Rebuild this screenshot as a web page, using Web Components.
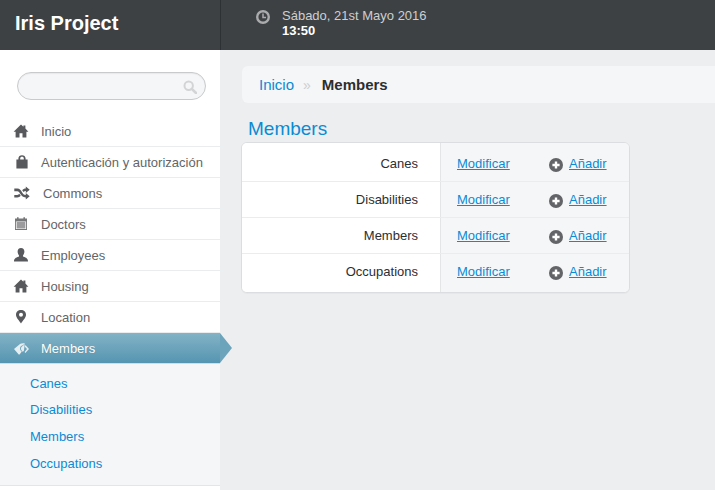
<!DOCTYPE html>
<html><head><meta charset="utf-8"><style>
html,body{margin:0;padding:0;height:490px;overflow:hidden;background:#edeef0;font-family:"Liberation Sans",Arial,sans-serif}
</style></head><body>
<iris-app></iris-app>
<script>
const ICONS={
home:'<path d="M7 .6 L9.4 2.8 V1.4 H11.4 V4.6 L14.4 7.8 H12.4 V13.4 H8.5 V9.2 H5.5 V13.4 H1.6 V7.8 H-.4 Z"/>',
lock:'<path fill-rule="evenodd" d="M2.4 4.4 V3.6 C2.4 1.4 4 .2 6 .2 S9.6 1.4 9.6 3.6 V4.4 H11.6 V13.5 H.4 V4.4 Z M4.2 4.4 H7.8 V3.6 C7.8 2.4 7.1 1.8 6 1.8 S4.2 2.4 4.2 3.6 Z"/>',
shuffle:'<path d="M0 2.6 H3 C5.6 2.6 6.6 4.5 7.7 6.2 C8.6 7.6 9.5 9 11.5 9 V7 L15.4 10.2 L11.5 13.4 V11.4 C8.4 11.4 7 9.4 5.9 7.7 C5 6.3 4.4 5.2 3 5.2 H0 Z M0 8.9 H3 C3.9 8.9 4.5 8.4 5 7.8 L6.4 9.8 C5.5 10.8 4.4 11.4 3 11.4 H0 Z M7.9 4.2 C8.8 3.2 10 2.6 11.5 2.6 V.6 L15.4 3.8 L11.5 7 V5 C10.5 5 9.8 5.5 9.3 6.1 Z"/>',
cal:'<path opacity=".82" fill-rule="evenodd" d="M0 1.6 H2 V.2 H3.6 V1.6 H8.4 V.2 H10 V1.6 H12 V13 H0 Z M.9 4.4 V12.1 H11.1 V4.4 Z"/><path opacity=".6" d="M1.6 5 H10.4 V11.5 H1.6 Z"/>',
user:'<path d="M7 0 C9.2 0 10.4 1.6 10.4 3.6 C10.4 5.4 9.6 6.7 9 7.4 V8.6 C10.6 9.4 14 9.8 14 13.4 H0 C0 9.8 3.4 9.4 5 8.6 V7.4 C4.4 6.7 3.6 5.4 3.6 3.6 C3.6 1.6 4.8 0 7 0 Z"/>',
pin:'<path fill-rule="evenodd" d="M5 0 C7.9 0 10 2 10 4.8 C10 7.8 6.6 11 5 13.4 C3.4 11 0 7.8 0 4.8 C0 2 2.1 0 5 0 Z M5 2.8 A2 2 0 1 0 5 6.8 A2 2 0 1 0 5 2.8 Z"/>',
tag:'<path d="M0 7 L6 2 C7 1.2 9 1 11 1.4 L8.7 3.2 C6.9 3.4 5.8 5.2 6.1 7 C6.2 8.1 6.9 9 7.8 9.6 L5.6 12.4 C5.3 12.6 5 12.6 4.7 12.4 Z M9 3.8 L10.8 1.9 C10.3 4 10.4 6.8 9.8 8.9 L8.6 9.7 C7.4 8.6 6.9 7.6 7 6.3 C7.1 5.1 8 4.2 9 3.8 Z M11.4 3 L15 7 L11.3 11 L10.6 9.9 L13 7 L10.9 4.7 Z"/>'
};
const VB={home:'0 0 14 14',lock:'0 0 12 14',shuffle:'0 0 15.4 14',cal:'0 0 12 14',user:'0 0 14 14',pin:'0 0 10 14',tag:'0 0 15 14'};
class IrisIcon extends HTMLElement{
  connectedCallback(){
    const n=this.getAttribute('name'),w=this.getAttribute('w')||14,h=this.getAttribute('h')||14;
    this.attachShadow({mode:'open'}).innerHTML=`<style>:host{display:inline-flex;align-items:center;justify-content:center;color:inherit}svg{display:block;fill:currentColor;overflow:visible}</style><svg width="${w}" height="${h}" viewBox="${VB[n]}">${ICONS[n]}</svg>`;
  }
}
customElements.define('iris-icon',IrisIcon);
class IrisHeader extends HTMLElement{
  constructor(){super();this.attachShadow({mode:'open'}).innerHTML=`<style>
  :host{display:flex;height:50px;background:#3e4144;color:#fff}
  .brand{box-sizing:border-box;width:221px;padding:0 0 3px 15px;display:flex;align-items:center;font-size:20px;font-weight:bold;border-right:1px solid #2e3134}
  .clock{display:flex;padding:8px 0 0 35px;gap:12px}
  svg{display:block;margin-top:2px}
  .t{font-size:13px;line-height:15px;color:#cdcfd1}
  .t b{display:block;color:#fff;font-size:13px}
  </style><div class="brand">Iris Project</div>
  <div class="clock"><svg width="14" height="14" viewBox="0 0 14 14"><circle cx="7" cy="7" r="5.8" fill="none" stroke="#a9abad" stroke-width="2.4"/><path d="M7 3.6V7.4H10" fill="none" stroke="#a9abad" stroke-width="1.5"/></svg>
  <div class="t">Sábado, 21st Mayo 2016<b>13:50</b></div></div>`}
}
customElements.define('iris-header',IrisHeader);
class IrisSearch extends HTMLElement{
  constructor(){super();this.attachShadow({mode:'open'}).innerHTML=`<style>
  :host{display:block;box-sizing:border-box;margin:22px 14px 0 17px;height:28px;border:1px solid #c9cacc;border-radius:14px;background:#f5f6f8;position:relative;box-shadow:inset 0 1px 1px #e8e9eb}
  svg{position:absolute;right:8px;top:7px}
  </style><svg width="14" height="14" viewBox="0 0 14 14"><circle cx="5.7" cy="5.7" r="4.2" fill="none" stroke="#d2d4d6" stroke-width="2"/><path d="M8.8 8.8L13 13" stroke="#d2d4d6" stroke-width="2.6" stroke-linecap="round"/></svg>`}
}
customElements.define('iris-search',IrisSearch);
class IrisNavItem extends HTMLElement{
  constructor(){super();this.attachShadow({mode:'open'}).innerHTML=`<style>
  :host{display:flex;box-sizing:border-box;height:30px;margin-bottom:1px;align-items:center;border-bottom:1px solid #ebecee;color:#636569;font-size:13px;position:relative;padding-bottom:1px}
  .i{width:41px;flex:none;display:flex;justify-content:flex-start;padding-left:14px;box-sizing:border-box;color:#58595c}
  :host([active]){height:31px;margin-bottom:0;background:linear-gradient(#83b3c6,#5595b1);color:#fff;border-bottom:1px solid #d8dadd;margin-top:-1px;padding:1px 0 0;text-shadow:0 0 1px rgba(0,0,0,.15)}
  :host([active]) .i{color:#e6eef1}
  :host([active])::after{content:"";position:absolute;left:100%;top:0;border-left:12px solid #6ca4bc;border-top:15px solid transparent;border-bottom:15px solid transparent}
  </style><span class="i"><slot name="icon"></slot></span><span><slot></slot></span>`}
}
customElements.define('iris-nav-item',IrisNavItem);
class IrisSubmenu extends HTMLElement{
  constructor(){super();this.attachShadow({mode:'open'}).innerHTML=`<style>
  :host{display:flex;flex-direction:column;box-sizing:border-box;height:122px;padding-top:6.7px;background:#f5f6f8;border-bottom:1px solid #e4e5e7}
  ::slotted(a){display:block;height:26.7px;line-height:26.7px;padding-left:30px;color:#0a8bd4;font-size:13px;text-decoration:none}
  </style><slot></slot>`}
}
customElements.define('iris-submenu',IrisSubmenu);
class IrisSidebar extends HTMLElement{
  constructor(){super();this.attachShadow({mode:'open'}).innerHTML=`<style>
  :host{display:block;width:220px;height:440px;background:#fff;flex:none;position:relative}
  nav{margin-top:17px}
  </style><iris-search></iris-search><nav><slot></slot></nav>`}
}
customElements.define('iris-sidebar',IrisSidebar);
class IrisCrumbs extends HTMLElement{
  constructor(){super();this.attachShadow({mode:'open'}).innerHTML=`<style>
  :host{display:flex;align-items:center;box-sizing:border-box;height:37px;margin-left:1px;background:#f5f6f7;border-radius:6px 0 0 6px;padding:0 0 0 17px;font-size:15px;color:#2d2e30}
  .l{color:#0a8bd4;font-size:15px}.s{color:#ccced1;margin:0 11px 0 9px;font-size:14px}
  b{font-size:15px}
  </style><span class="l">Inicio</span><span class="s">»</span><b>Members</b>`}
}
customElements.define('iris-crumbs',IrisCrumbs);
class IrisRow extends HTMLElement{
  constructor(){super();this.attachShadow({mode:'open'}).innerHTML=`<style>
  :host{display:flex;box-sizing:border-box;height:36px;border-bottom:1px solid #ebecee;font-size:13px}
  :host(:first-child){height:39px}
  :host(:first-child) .n,:host(:first-child) .c{padding-top:3px}
  :host(:last-child){border-bottom:0;height:38px}
  .n{box-sizing:border-box;width:199px;text-align:right;padding:0 22px 0 0;line-height:35px;background:#fff;color:#2d2e30;border-right:1px solid #e4e5e7}
  .c{display:flex;align-items:flex-start;flex:1;background:#f5f6f8;line-height:35px;padding-left:16px;color:#0a8bd4}
  a{color:#0a8bd4;text-decoration:underline}
  .m{width:92px}
  .a{display:flex;align-items:center;height:35px;gap:6px}
  svg{display:block;margin-top:2px}
  </style><div class="n"><slot></slot></div><div class="c"><a class="m" href="#">Modificar</a><span class="a"><svg width="14" height="14" viewBox="0 0 14 14"><circle cx="7" cy="7" r="7" fill="#626467"/><path d="M7 3.4V10.6M3.4 7H10.6" stroke="#fff" stroke-width="2.4"/></svg><a href="#">Añadir</a></span></div>`}
}
customElements.define('iris-row',IrisRow);
class IrisCard extends HTMLElement{
  constructor(){super();this.attachShadow({mode:'open'}).innerHTML=`<style>
  :host{display:block;box-sizing:border-box;width:389px;border:1px solid #dcdde0;border-radius:6px;overflow:hidden;background:#fff;box-shadow:0 1px 1px rgba(0,0,0,.03)}
  </style><slot></slot>`}
}
customElements.define('iris-card',IrisCard);
class IrisApp extends HTMLElement{
  constructor(){super();this.attachShadow({mode:'open'}).innerHTML=`<style>
  :host{display:block;width:715px;height:490px;overflow:hidden}
  .b{display:flex}
  main{flex:1;padding:16px 0 0 21px;min-width:0}
  h1{margin:14px 0 1px 7px;font-weight:normal;font-size:19px;line-height:24px;color:#0a8bd4}
  </style><iris-header></iris-header><div class="b">
  <iris-sidebar>
   <iris-nav-item><iris-icon slot="icon" name="home"></iris-icon>Inicio</iris-nav-item>
   <iris-nav-item><iris-icon slot="icon" name="lock" w="12" style="margin-left:2px;margin-right:-2px"></iris-icon>Autenticación y autorización</iris-nav-item>
   <iris-nav-item><iris-icon slot="icon" name="shuffle" w="16"></iris-icon><span style="margin-left:2px">Commons</span></iris-nav-item>
   <iris-nav-item><iris-icon slot="icon" name="cal" w="12" style="margin-left:1px"></iris-icon>Doctors</iris-nav-item>
   <iris-nav-item><iris-icon slot="icon" name="user"></iris-icon>Employees</iris-nav-item>
   <iris-nav-item><iris-icon slot="icon" name="home"></iris-icon>Housing</iris-nav-item>
   <iris-nav-item><iris-icon slot="icon" name="pin" w="10" style="margin-left:2px"></iris-icon>Location</iris-nav-item>
   <iris-nav-item active><iris-icon slot="icon" name="tag" w="15"></iris-icon>Members</iris-nav-item>
   <iris-submenu><a href="#">Canes</a><a href="#">Disabilities</a><a href="#">Members</a><a href="#">Occupations</a></iris-submenu>
  </iris-sidebar>
  <main><iris-crumbs></iris-crumbs><h1>Members</h1>
  <iris-card><iris-row>Canes</iris-row><iris-row>Disabilities</iris-row><iris-row>Members</iris-row><iris-row>Occupations</iris-row></iris-card>
  </main></div>`}
}
customElements.define('iris-app',IrisApp);
</script></body></html>
